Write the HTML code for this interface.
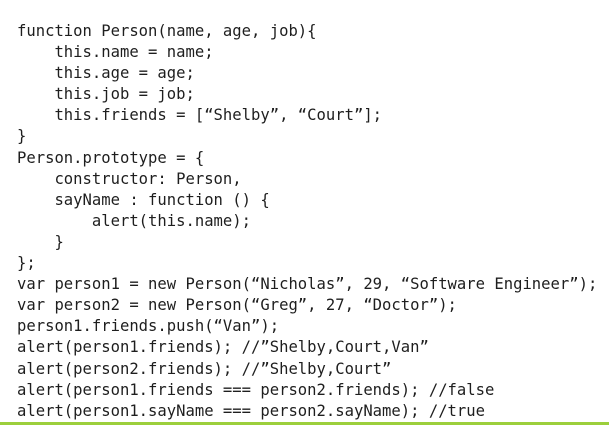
<!DOCTYPE html>
<html><head><meta charset="utf-8"><style>
html,body{margin:0;padding:0;width:609px;height:425px;overflow:hidden;background:#fff;}
pre{position:absolute;left:17px;top:21px;margin:0;font-family:"DejaVu Sans Mono","Liberation Mono",monospace;font-size:15.55px;line-height:21.1px;color:#1e1e1e;white-space:pre;}
.g{position:absolute;left:0;top:422px;width:609px;height:3px;background:#9ccf3c;}
</style></head><body>
<pre>function Person(name, age, job){
    this.name = name;
    this.age = age;
    this.job = job;
    this.friends = [“Shelby”, “Court”];
}
Person.prototype = {
    constructor: Person,
    sayName : function () {
        alert(this.name);
    }
};
var person1 = new Person(“Nicholas”, 29, “Software Engineer”);
var person2 = new Person(“Greg”, 27, “Doctor”);
person1.friends.push(“Van”);
alert(person1.friends); //”Shelby,Court,Van”
alert(person2.friends); //”Shelby,Court”
alert(person1.friends === person2.friends); //false
alert(person1.sayName === person2.sayName); //true</pre>
<div class="g"></div>
</body></html>
